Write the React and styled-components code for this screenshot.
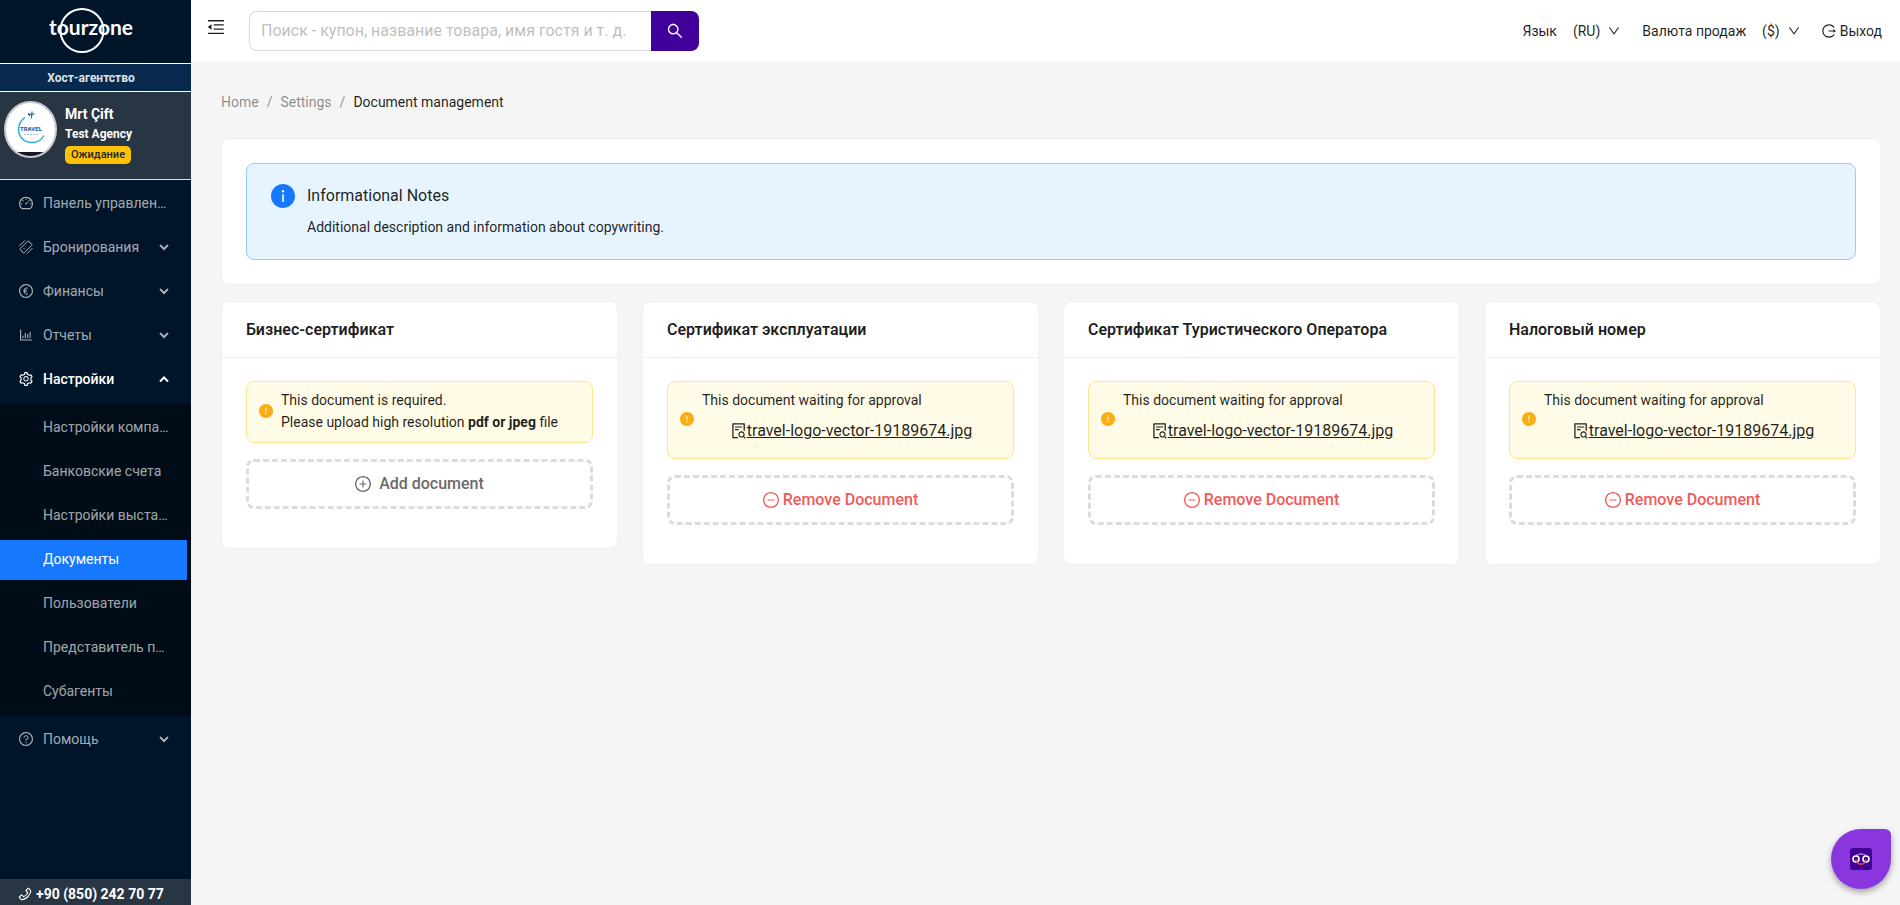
import React from 'react';
import styled, { createGlobalStyle, css } from 'styled-components';
import {
    AiFillExclamationCircle,
    AiFillInfoCircle,
    AiOutlineBarChart,
    AiOutlineDashboard,
    AiOutlineDown,
    AiOutlineEuro,
    AiOutlineFileSearch,
    AiOutlineLogout,
    AiOutlineMenuFold,
    AiOutlineMinusCircle,
    AiOutlinePhone,
    AiOutlinePlusCircle,
    AiOutlineQuestionCircle,
    AiOutlineSearch,
    AiOutlineSetting,
} from 'react-icons/ai';

const GlobalStyle = createGlobalStyle`
    *, *:before, *:after {
        box-sizing: border-box;
    }

    body {
        margin: 0;
        background: #f5f5f5;
        color: rgba(0, 0, 0, 0.88);
        font-family: Roboto, "Liberation Sans", sans-serif;
        font-size: 14px;
        line-height: 22px;
    }

    button, input, select {
        font: inherit;
        color: inherit;
    }

    a {
        color: inherit;
        text-decoration: none;
    }

    ul, ol {
        margin: 0;
        padding: 0;
        list-style: none;
    }

    h1, h2, p {
        margin: 0;
    }

    svg {
        flex: none;
    }
`;

const Layout = styled.div`
    display: flex;
    min-height: 100vh;
`;

/* Sidebar */

const Sidebar = styled.aside`
    display: flex;
    flex-direction: column;
    flex: 0 0 191px;
    min-width: 0;
    background: #001529;
    color: #fff;
`;

const LogoLink = styled.a`
    display: block;
    height: 63px;
    padding: 6px 0 0 48px;
`;

const Band = styled.div`
    border-top: 1px solid #fff;
    border-bottom: 1px solid #fff;
    padding: 3px 9px 2px 0;
    background: #082a4e;
    color: #dfe3e8;
    font-size: 12px;
    font-weight: 700;
    text-align: center;
`;

const UserPanel = styled.div`
    display: flex;
    gap: 8px;
    height: 88px;
    padding: 9px 4px 0;
    border-bottom: 1px solid #dfe1e3;
    background: #283643;
`;

const UserText = styled.div`
    display: flex;
    flex-direction: column;
    align-items: flex-start;
    font-weight: 700;
`;

const UserName = styled.span`
    line-height: 26px;
`;

const AgencyName = styled.span`
    font-size: 12px;
    line-height: 14px;
`;

const Badge = styled.span`
    margin-top: 5px;
    padding: 0 6px;
    border-radius: 5px;
    background: #ffc107;
    color: #212529;
    font-size: 11px;
    font-weight: 500;
    line-height: 18px;
`;

const Menu = styled.ul`
    padding: 4px 0 0;
`;

const SubMenu = styled.ul`
    margin-bottom: 4px;
    padding: 4px 0 0;
    background: #000c17;

    li {
        padding-bottom: 4px;
    }
`;

const rowStyle = css`
    display: flex;
    align-items: center;
    gap: 10px;
    width: 187px;
    height: 40px;
    padding: 0 18px 2px 19px;
    border: 0;
    background: transparent;
    color: ${({ $open }) => ($open ? '#fff' : 'rgba(255, 255, 255, 0.65)')};
    font-weight: ${({ $open }) => ($open ? 500 : 400)};
    text-align: left;
    cursor: pointer;
`;

const MenuLink = styled.a`
    ${rowStyle}
    margin-bottom: 4px;
`;

const MenuButton = styled.button`
    ${rowStyle}
    margin-bottom: 4px;
`;

const SubLink = styled.a`
    ${rowStyle}
    padding-left: 43px;

    ${({ $active }) => $active && css`
        background: #1677ff;
        color: #fff;
    `}
`;

const MenuLabel = styled.span`
    flex: 1;
    min-width: 0;
    overflow: hidden;
    text-overflow: ellipsis;
    white-space: nowrap;
`;

const Phone = styled.a`
    display: flex;
    align-items: center;
    gap: 4px;
    height: 26px;
    margin-top: auto;
    padding: 4px 0 0 18px;
    background: #283643;
    font-weight: 700;
`;

/* Header */

const Main = styled.div`
    flex: 1;
    min-width: 0;
`;

const Header = styled.header`
    display: flex;
    align-items: center;
    height: 62px;
    padding: 0 18px 0 16px;
    background: #fff;
`;

const FoldButton = styled.button`
    display: flex;
    margin: 0 24px 8px 0;
    padding: 0;
    border: 0;
    background: none;
    cursor: pointer;
`;

const Search = styled.form`
    display: flex;
    width: 450px;
    height: 40px;
`;

const SearchInput = styled.input`
    flex: 1;
    min-width: 0;
    padding: 0 11px;
    border: 1px solid #d9d9d9;
    border-right: 0;
    border-radius: 8px 0 0 8px;
    background: #fff;
    font-size: 16px;

    &::placeholder {
        color: #bfbfbf;
        opacity: 1;
    }
`;

const SearchButton = styled.button`
    display: flex;
    align-items: center;
    justify-content: center;
    width: 48px;
    border: 0;
    border-radius: 0 8px 8px 0;
    background: #40009a;
    color: #fff;
    cursor: pointer;
`;

const HeaderNav = styled.nav`
    display: flex;
    align-items: center;
    gap: 22px;
    margin-left: auto;
`;

const Picker = styled.div`
    display: flex;
    align-items: center;
    gap: 8px;

    label {
        margin-right: 8px;
    }

    svg {
        pointer-events: none;
    }
`;

const PickerSelect = styled.select`
    field-sizing: content;
    appearance: none;
    padding: 0;
    border: 0;
    background: none;
    cursor: pointer;
`;

const LogoutLink = styled.a`
    display: flex;
    align-items: center;
    gap: 4px;
`;

/* Content */

const Content = styled.main`
    padding: 29px 19px 24px 30px;
`;

const Crumbs = styled.ol`
    display: flex;
    margin-bottom: 25px;
    color: rgba(0, 0, 0, 0.45);

    li + li:before {
        content: '/';
        margin: 0 8px;
        color: rgba(0, 0, 0, 0.45);
    }

    li:last-child {
        color: rgba(0, 0, 0, 0.88);
    }
`;

const Card = styled.section`
    border: 1px solid #f0f0f0;
    border-radius: 8px;
    background: #fff;
`;

const InfoCard = styled(Card)`
    margin-bottom: 16px;
    padding: 24px;
`;

const InfoAlert = styled.div`
    display: flex;
    gap: 12px;
    padding: 20px 24px 21px;
    border: 1px solid #91caff;
    border-radius: 8px;
    background: #e6f4ff;

    > svg {
        color: #1677ff;
    }
`;

const InfoTitle = styled.h1`
    margin-bottom: 8px;
    font-size: 16px;
    font-weight: 400;
    line-height: 24px;
`;

const CardGrid = styled.div`
    display: grid;
    grid-template-columns: repeat(4, minmax(0, 1fr));
    align-items: start;
    gap: 24px;
`;

const CardHead = styled.h2`
    height: 56px;
    padding: 0 24px;
    border-bottom: 1px solid #f0f0f0;
    font-size: 16px;
    font-weight: 600;
    line-height: 56px;
`;

const CardBody = styled.div`
    display: flex;
    flex-direction: column;
    gap: 16px;
    padding: 23px 24px 39px;
`;

const Warning = styled.div`
    display: flex;
    align-items: center;
    gap: 8px;
    padding: 7px 12px 9px;
    border: 1px solid #ffe58f;
    border-radius: 8px;
    background: #fffbe6;

    > svg {
        color: #faad14;
    }
`;

const WarningText = styled.div`
    flex: 1;
    min-width: 0;
`;

const FileLink = styled.a`
    display: flex;
    align-items: center;
    justify-content: center;
    height: 38px;
    padding-top: 2px;
    font-size: 16px;

    span {
        text-decoration: underline;
    }
`;

const DocumentButton = styled.button`
    display: flex;
    align-items: center;
    justify-content: center;
    gap: ${({ $danger }) => ($danger ? '4px' : '8px')};
    height: 50px;
    border: 3px dashed #dcdcdc;
    border-radius: 8px;
    background: #fff;
    color: ${({ $danger }) => ($danger ? '#f05a5a' : '#6a6a6a')};
    font-size: 16px;
    font-weight: 500;
    cursor: pointer;
`;

/* Lies over the page in the corner */
const ChatButton = styled.button`
    position: fixed;
    right: 9px;
    bottom: 16px;
    display: flex;
    align-items: center;
    justify-content: center;
    width: 60px;
    height: 60px;
    padding: 0;
    border: 0;
    border-radius: 50% 6px 50% 50%;
    background: #8a36de;
    box-shadow: 0 3px 6px rgba(0, 0, 0, 0.35);
    cursor: pointer;
`;

// Ant glyphs carry a 64 unit margin, trim it so size is the drawn size
const Icon = ({ as: Glyph, size = 14 }) => (
    <Glyph size={size} viewBox="64 64 896 896" aria-hidden="true" />
);

const Logo = () => (
    <svg width="88" height="48" viewBox="0 0 88 48" fill="none" aria-label="tourzone">
        <circle cx="34" cy="24.5" r="21.5" stroke="#fff" strokeWidth="2" />
        <text
            x="1"
            y="29"
            fill="#fff"
            fontFamily="Lato, sans-serif"
            fontSize="21"
            fontWeight="700"
        >
            tourzone
        </text>
    </svg>
);

const TicketIcon = () => (
    <svg width="14" height="14" viewBox="0 0 14 14" fill="none" stroke="currentColor" strokeLinecap="round">
        <path d="M8.600 1.300q.700-.700 1.400 0l.6.600q-.1 1.500 1.500 1.500l.6.600q.700.700 0 1.400L5.400 12.700q-.7.700-1.400 0l-.6-.6q0-1.500-1.500-1.500l-.6-.6q-.7-.7 0-1.400Z" />
        <path d="M.6 5.800 5.800.6M8.200 13.400l5.200-5.200M4.800 8.400l.8.800" />
    </svg>
);

const Arrow = ({ up }) => (
    <svg width="10" height="10" viewBox="0 0 10 10" fill="none" stroke="currentColor" strokeWidth="2" aria-hidden="true">
        <path d={up ? 'M1 7.500 5 3.500l4 4' : 'M1 3l4 4 4-4'} />
    </svg>
);

const Avatar = () => (
    <svg width="53" height="57" viewBox="0 0 53 57" fill="none" aria-hidden="true">
        <clipPath id="avatarShape">
            <ellipse cx="26.5" cy="28.5" rx="25.5" ry="27.5" />
        </clipPath>
        <g clipPath="url(#avatarShape)">
            <path fill="#fff" d="M0 0h53v57H0z" />
            <path fill="#15142a" d="M0 51h53v6H0z" />
        </g>
        <ellipse cx="26.5" cy="28.5" rx="25.5" ry="27.5" stroke="#c8c9cc" strokeWidth="2" />
        <path d="M21 16.500a14 14 0 0 0-5.500 17c4 10 19 11 24.500 1" stroke="#26a9e0" strokeWidth="1.4" />
        <path d="m24 13.500 6.500-.5M28 10.500l-.5 7M24.500 12l1 3" stroke="#1d4f86" />
        <text x="16" y="30" fill="#1d5a93" fontFamily="Roboto, sans-serif" fontSize="6" fontWeight="700">
            TRAVEL
        </text>
        <path d="M20 33.500h15" stroke="#9fc0d8" strokeDasharray="2 1" />
    </svg>
);

const BotIcon = () => (
    <svg width="22" height="22" viewBox="0 0 22 22" fill="none">
        <rect width="22" height="22" rx="3" fill="#430097" />
        <path d="M6 7.500c3-2 7-2 10 0" stroke="#d9c8f0" />
        <circle cx="6" cy="11" r="3" stroke="#fff" strokeWidth="1.6" />
        <circle cx="16" cy="11" r="3" stroke="#fff" strokeWidth="1.6" />
        <path d="M6 11c0 7 10 7 10 0" stroke="#e8562a" strokeWidth="1.3" />
    </svg>
);

const settingsItems = [
    'Настройки компании',
    'Банковские счета',
    'Настройки выставления счетов',
    'Документы',
    'Пользователи',
    'Представитель по продажам',
    'Субагенты',
];

const pendingDocuments = [
    'Сертификат эксплуатации',
    'Сертификат Туристического Оператора',
    'Налоговый номер',
];

const MenuGroup = ({ icon, label, open, children }) => (
    <li>
        <MenuButton type="button" $open={open} aria-expanded={Boolean(open)}>
            {icon}
            <MenuLabel>{label}</MenuLabel>
            <Arrow up={open} />
        </MenuButton>
        {children}
    </li>
);

const SideNav = () => (
    <Sidebar>
        <LogoLink href="#"><Logo /></LogoLink>
        <Band>Хост-агентство</Band>
        <UserPanel>
            <Avatar />
            <UserText>
                <UserName>Mrt Çift</UserName>
                <AgencyName>Test Agency</AgencyName>
                <Badge>Ожидание</Badge>
            </UserText>
        </UserPanel>
        <Menu>
            <li>
                <MenuLink href="#">
                    <Icon as={AiOutlineDashboard} />
                    <MenuLabel>Панель управления</MenuLabel>
                </MenuLink>
            </li>
            <MenuGroup icon={<TicketIcon />} label="Бронирования" />
            <MenuGroup icon={<Icon as={AiOutlineEuro} />} label="Финансы" />
            <MenuGroup icon={<Icon as={AiOutlineBarChart} />} label="Отчеты" />
            <MenuGroup icon={<Icon as={AiOutlineSetting} />} label="Настройки" open>
                <SubMenu>
                    {settingsItems.map(item => (
                        <li key={item}>
                            <SubLink href="#" $active={item === 'Документы'}>
                                <MenuLabel>{item}</MenuLabel>
                            </SubLink>
                        </li>
                    ))}
                </SubMenu>
            </MenuGroup>
            <MenuGroup icon={<Icon as={AiOutlineQuestionCircle} />} label="Помощь" />
        </Menu>
        <Phone href="tel:+908502427077">
            <Icon as={AiOutlinePhone} />
            +90 (850) 242 70 77
        </Phone>
    </Sidebar>
);

const TopBar = () => (
    <Header>
        <FoldButton type="button" aria-label="Свернуть меню">
            <Icon as={AiOutlineMenuFold} size={18} />
        </FoldButton>
        <Search onSubmit={e => e.preventDefault()}>
            <SearchInput
                type="text"
                aria-label="Поиск"
                placeholder="Поиск - купон, название товара, имя гостя и т. д."
            />
            <SearchButton type="submit" aria-label="Найти">
                <Icon as={AiOutlineSearch} size={16} />
            </SearchButton>
        </Search>
        <HeaderNav>
            <Picker>
                <label htmlFor="language">Язык</label>
                <PickerSelect id="language">
                    <option>(RU)</option>
                </PickerSelect>
                <Icon as={AiOutlineDown} size={12} />
            </Picker>
            <Picker>
                <label htmlFor="currency">Валюта продаж</label>
                <PickerSelect id="currency">
                    <option>($)</option>
                </PickerSelect>
                <Icon as={AiOutlineDown} size={12} />
            </Picker>
            <LogoutLink href="#">
                <Icon as={AiOutlineLogout} />
                Выход
            </LogoutLink>
        </HeaderNav>
    </Header>
);

const App = () => {
    return (
        <Layout>
            <GlobalStyle />
            <SideNav />
            <Main>
                <TopBar />
                <Content>
                    <Crumbs>
                        <li><a href="#">Home</a></li>
                        <li><a href="#">Settings</a></li>
                        <li>Document management</li>
                    </Crumbs>
                    <InfoCard>
                        <InfoAlert>
                            <Icon as={AiFillInfoCircle} size={24} />
                            <div>
                                <InfoTitle>Informational Notes</InfoTitle>
                                <p>Additional description and information about copywriting.</p>
                            </div>
                        </InfoAlert>
                    </InfoCard>
                    <CardGrid>
                        <Card>
                            <CardHead>Бизнес-сертификат</CardHead>
                            <CardBody>
                                <Warning>
                                    <Icon as={AiFillExclamationCircle} />
                                    <WarningText>
                                        <p>This document is required.</p>
                                        <p>Please upload high resolution <b>pdf or jpeg</b> file</p>
                                    </WarningText>
                                </Warning>
                                <DocumentButton type="button">
                                    <Icon as={AiOutlinePlusCircle} size={16} />
                                    Add document
                                </DocumentButton>
                            </CardBody>
                        </Card>
                        {pendingDocuments.map(title => (
                            <Card key={title}>
                                <CardHead>{title}</CardHead>
                                <CardBody>
                                    <Warning>
                                        <Icon as={AiFillExclamationCircle} />
                                        <WarningText>
                                            <p>This document waiting for approval</p>
                                            <FileLink href="#">
                                                <Icon as={AiOutlineFileSearch} size={16} />
                                                <span>travel-logo-vector-19189674.jpg</span>
                                            </FileLink>
                                        </WarningText>
                                    </Warning>
                                    <DocumentButton type="button" $danger>
                                        <Icon as={AiOutlineMinusCircle} size={16} />
                                        Remove Document
                                    </DocumentButton>
                                </CardBody>
                            </Card>
                        ))}
                    </CardGrid>
                </Content>
            </Main>
            <ChatButton type="button" aria-label="Чат">
                <BotIcon />
            </ChatButton>
        </Layout>
    );
};

export default App;
